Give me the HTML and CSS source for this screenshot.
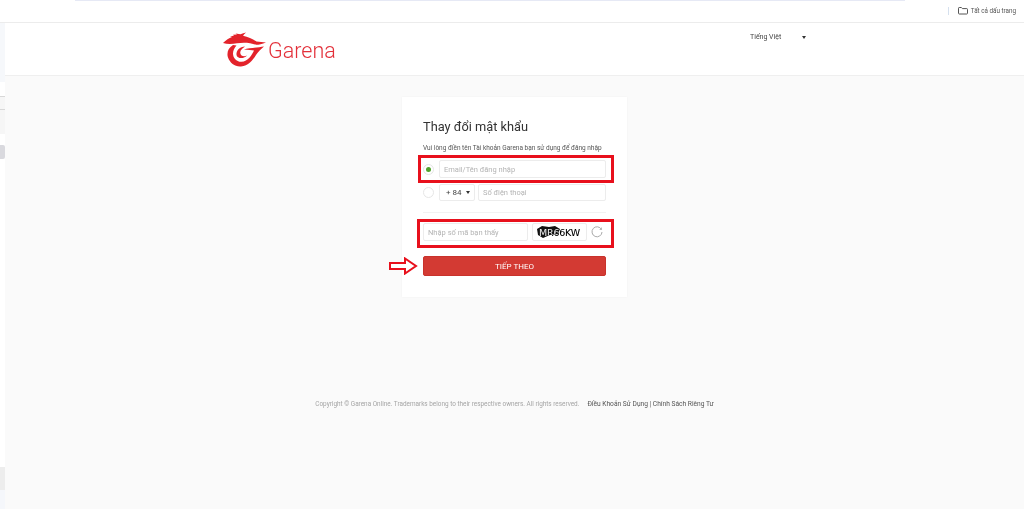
FILE: index.html
```html
<!DOCTYPE html>
<html lang="vi">
<head>
<meta charset="utf-8">
<title>Thay đổi mật khẩu</title>
<link rel="stylesheet" href="styles.css">
</head>
<body>
<div class="page">
  <div class="bookmarks">
    <div class="tab-edge"></div>
    <div class="bookmark-all">
      <span class="bm-sep"></span>
      <svg class="folder" width="10" height="8" viewBox="0 0 10 8"><path d="M.5 1.200c0-.4.3-.7.7-.7h2.200l1 1.100h4.400c.4 0 .7.3.7.7v4c0 .4-.3.7-.7.7H1.200c-.4 0-.7-.3-.7-.7z" fill="none" stroke="#555" stroke-width="1"/></svg>
      <span>Tất cả dấu trang</span>
    </div>
  </div>
  <div class="body-row">
    <aside class="strip">
      <div class="s-a"></div>
      <div class="s-b"></div>
      <div class="s-c"></div>
      <div class="s-d"></div>
      <div class="s-e"></div>
      <div class="s-pill"></div>
      <div class="s-f"></div>
      <div class="s-g"></div>
      <div class="s-h"></div>
    </aside>
    <main class="main">
      <header class="header">
        <div class="header-inner">
          <div class="brand">
            <svg class="logo" width="43" height="36" viewBox="0 0 43 36">
              <path fill="#e3232b" d="M0 11C3 8 6 6 9 5L7 4.800 11 3.500 10 2.800 14 2.600 12.500 1.400 17.500 2.300C19.500 1.600 21 1 23 0.500 21.500 1.800 20.500 3 20 3.800 25 5 30 7 33.500 9.500L43 10.500C39 12 36 12.800 33 12.800 27 10.500 20 10.300 14 11.300 9 12.200 4 12.300 0 11Z"/>
              <path fill="#e3232b" d="M10 13C5 16 3.500 21 5 25.500 7 31 12 35 18 34.500 25 34 30 28 33 23 35 20 38 17 41 14.500 35 15.500 26 16 21 17.500 25 17.800 29 18.300 31 18.500 29 23 25 29.500 18.500 29.800 13.500 30 10 26 10 21.500 10 18.500 11.500 15.500 13.500 13.500Z"/>
              <path fill="#e3232b" d="M13.500 23C13 18 17 15 22 14.500 18 17 16.500 19.500 17.500 22 18.500 24.500 21.500 24.800 24 23.500 22 26.500 14.500 27.500 13.500 23Z"/>
            </svg>
            <span class="wordmark">Garena</span>
          </div>
          <div class="lang"><span>Tiếng Việt</span><span class="caret"></span></div>
        </div>
      </header>
      <section class="content">
        <div class="card">
          <h1 class="title">Thay đổi mật khẩu</h1>
          <p class="desc">Vui lòng điền tên Tài khoản Garena bạn sử dụng để đăng nhập</p>
          <div class="row row-email">
            <span class="radio"><span class="dot"></span></span>
            <div class="field grow"><span class="ph">Email/Tên đăng nhập</span></div>
          </div>
          <div class="row row-phone">
            <span class="radio"></span>
            <div class="field code"><span class="code-num">+ 84</span><span class="caret"></span></div>
            <div class="field grow"><span class="ph">Số điện thoại</span></div>
          </div>
          <div class="divider"></div>
          <div class="captcha-row">
            <div class="field captcha-input"><span class="ph">Nhập số mã bạn thấy</span></div>
            <div class="captcha-img">
              <svg class="blobs" width="24" height="14" viewBox="0 0 24 14"><path d="M0 4 5 1 12 2 18 1 23 4 21 9 13 10 6 13 1 10Z" fill="#111"/></svg>
              <span class="captcha-text">MR66KW</span>
            </div>
            <svg class="refresh" width="12" height="12" viewBox="0 0 12 12"><path d="M10.400 3.400A5 5 0 1 0 11 6" fill="none" stroke="#aaa" stroke-width="1"/><path d="M11 1v3H8.200z" fill="#bbb"/></svg>
          </div>
          <button class="next" type="button">TIẾP THEO</button>

          <div class="mark mark-email"></div>
          <div class="mark mark-captcha"></div>
          <svg class="arrow" width="29" height="18" viewBox="0 0 29 18"><path d="M1 6h15V1.500L27 9 16 16.500V12H1z" fill="#fff" stroke="#e8101c" stroke-width="2"/></svg>
        </div>
        <footer class="footer">
          <span class="copy">Copyright © Garena Online. Trademarks belong to their respective owners. All rights reserved.</span>
          <span class="links">Điều Khoản Sử Dụng | Chính Sách Riêng Tư</span>
        </footer>
      </section>
    </main>
  </div>
</div>
</body>
</html>
```
FILE: styles.css
```css
* { box-sizing: border-box; }
html, body { margin: 0; padding: 0; }
body { font-family: Roboto, "Liberation Sans", sans-serif; background: #fff; color: #333; }
.page { width: 1024px; height: 509px; overflow: hidden; display: flex; flex-direction: column; }

.bookmarks { height: 23px; flex: none; background: #fff; border-bottom: 1px solid #ececec; display: flex; justify-content: space-between; padding-left: 75px; padding-right: 8px; }
.tab-edge { width: 830px; height: 1px; background: #e6e9f5; }
.bookmark-all { display: flex; align-items: center; font-size: 6.300px; color: #555; height: 22px; }
.bm-sep { width: 1px; height: 8px; background: #d5e0ee; margin-right: 9px; }
.folder { margin-right: 3px; }

.body-row { flex: 1; display: flex; min-height: 0; }
.strip { width: 5px; flex: none; display: flex; flex-direction: column; background: #fff; }
.s-a { height: 59px; background: #f6f8fb; }
.s-b { height: 15px; background: #fff; border-bottom: 1px solid #d8d8d8; }
.s-c { height: 13px; background: #f6f6f6; border-bottom: 1px solid #d8d8d8; }
.s-d { height: 24px; background: #f6f6f6; }
.s-e { height: 11px; background: #fff; }
.s-pill { height: 14px; background: #d9d9de; border-radius: 0 2px 2px 0; }
.s-f { height: 308px; background: #fff; }
.s-g { height: 23px; background: #ededed; }
.s-h { flex: 1; background: #f5f7fb; }

.main { flex: 1; display: flex; flex-direction: column; min-width: 0; background: #fafafa; }
.header { height: 53px; flex: none; background: #fff; border-bottom: 1px solid #efefef; }
.header-inner { width: 583px; margin: 0 auto; display: flex; justify-content: space-between; }
.brand { display: flex; align-items: flex-start; padding-top: 9px; }
.logo { display: block; }
.wordmark { font-family: Roboto, "Liberation Sans", sans-serif; font-weight: 300; font-size: 21.500px; line-height: 24px; color: #e3303a; margin: 7px 0 0 2px; }
.lang { width: 56px; display: flex; justify-content: space-between; align-items: center; font-size: 7px; color: #444; height: 12px; margin-top: 8px; }
.caret { width: 0; height: 0; border-left: 2px solid transparent; border-right: 2px solid transparent; border-top: 3px solid #333; }

.content { flex: 1; display: flex; flex-direction: column; align-items: center; }
.card { position: relative; width: 225px; height: 200px; margin-top: 21px; padding: 21px 21px 0; background: #fff; box-shadow: 0 0 2px rgba(0, 0, 0, .04); }
.title { margin: 0; font-size: 12.800px; line-height: 17px; font-weight: 400; color: #333; }
.desc { margin: 9px 0 0; font-size: 6.500px; line-height: 9px; color: #555; white-space: nowrap; }

.row { display: flex; align-items: center; }
.row-email { margin-top: 7px; }
.row-phone { margin-top: 6px; }
.row-phone .field { height: 17px; }
.radio { width: 11px; height: 11px; flex: none; margin-right: 5px; border: 1px solid #e6e6e6; border-radius: 50%; display: flex; align-items: center; justify-content: center; }
.dot { width: 5px; height: 5px; border-radius: 50%; background: #4fa32c; }
.field { height: 18px; border: 1px solid #ececec; border-radius: 2px; display: flex; align-items: center; padding-left: 4px; background: #fff; }
.grow { flex: 1; }
.ph { font-size: 7.500px; color: #b4b4b4; white-space: nowrap; }
.code { width: 36px; flex: none; margin-right: 3px; padding: 0 4px 0 6px; justify-content: space-between; }
.code-num { font-size: 8px; color: #444; }
.divider { height: 1px; background: #f2f2f2; margin-top: 11px; }

.captcha-row { display: flex; align-items: center; margin-top: 10px; }
.captcha-input { width: 105px; flex: none; height: 18px; }
.captcha-img { position: relative; width: 55px; height: 18px; margin-left: 4px; flex: none; border: 1px solid #ececec; border-radius: 2px; overflow: hidden; display: flex; align-items: center; justify-content: center; background: #fff; }
.captcha-text { position: relative; font-family: "DejaVu Sans", sans-serif; font-size: 9.500px; letter-spacing: -0.2px; color: #fff; mix-blend-mode: difference; }
.blobs { position: absolute; left: 4px; top: 1px; }
.refresh { margin-left: 4px; flex: none; }

.next { display: block; width: 183px; height: 20px; margin-top: 15px; padding: 0; border: 1px solid #c9322c; border-radius: 2px; background: #d33a33; color: #fff; font-family: inherit; font-size: 8px; }

.mark { position: absolute; border: 3px solid #e8101c; pointer-events: none; }
.mark-email { left: 16px; top: 58px; width: 196px; height: 28px; }
.mark-captcha { left: 15px; top: 122px; width: 197px; height: 29px; }
.arrow { position: absolute; left: -13px; top: 160px; }

.footer { display: flex; gap: 8px; margin-top: 103px; line-height: 9px; white-space: nowrap; }
.copy { font-size: 6.400px; color: #a5a5a5; }
.links { font-size: 6.650px; color: #555; }
```
